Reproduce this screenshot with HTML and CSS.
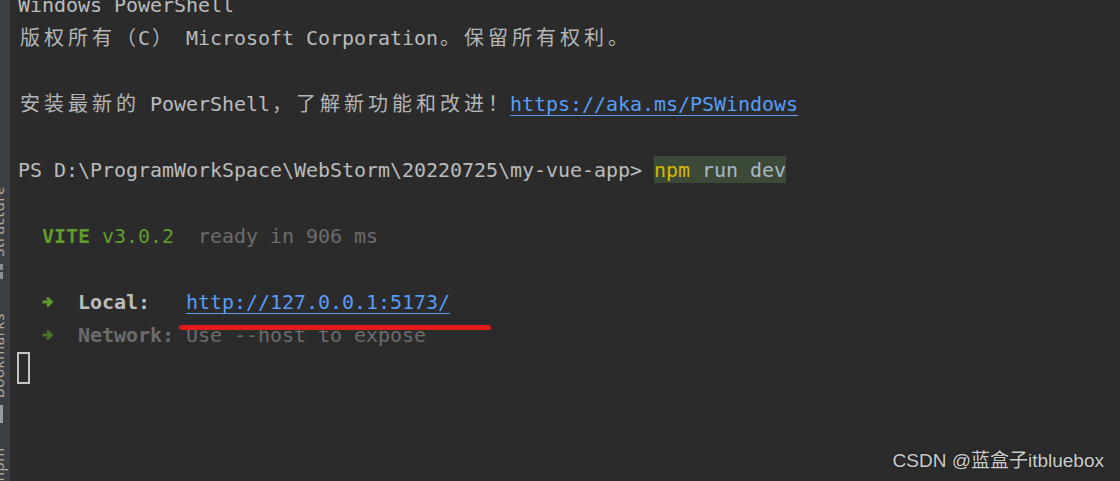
FILE: index.html
```html
<!DOCTYPE html>
<html lang="zh-CN">
<head>
  <meta charset="UTF-8">
  <title>Terminal – my-vue-app</title>
  <link rel="stylesheet" href="styles.css">
</head>
<body>

<div class="window">

  <!-- Barra lateral de herramientas -->
  <aside class="toolstrip">
    <span class="tool-label lbl-structure">Structure</span>
    <span class="tool-icon icon-grid"></span>
    <span class="tool-label lbl-bookmarks">Bookmarks</span>
    <span class="tool-icon icon-bookmark"></span>
    <span class="tool-label lbl-npm">npm</span>
  </aside>

  <!-- Salida del terminal -->
  <main class="terminal">
    <div class="output">
      <div class="line">Windows PowerShell</div>
      <div class="line"><span class="cjk">版权所有（</span>C<span class="cjk">）</span> Microsoft Corporation<span class="cjk">。保留所有权利。</span></div>
      <div class="line"></div>
      <div class="line"><span class="cjk">安装最新的</span> PowerShell<span class="cjk">，了解新功能和改进！</span><a class="link">https://aka.ms/PSWindows</a></div>
      <div class="line"></div>
      <div class="line">PS D:\ProgramWorkSpace\WebStorm\20220725\my-vue-app> <span class="cmd"><span class="cmd-name">npm</span> run dev</span></div>
      <div class="line"></div>
      <div class="line">  <b class="vite">VITE</b> <span class="vite">v3.0.2</span>  <span class="dim">ready in 906 ms</span></div>
      <div class="line"></div>
      <div class="line">  <svg class="arrow" viewBox="0 0 12 12"><path d="M0.5 6h8.5M5 1.8L9.4 6 5 10.2"/></svg>  <b>Local:</b>   <a class="link">http://127.0.0.1:5173/</a></div>
      <div class="line">  <svg class="arrow arrow-dim" viewBox="0 0 12 12"><path d="M0.5 6h8.5M5 1.8L9.4 6 5 10.2"/></svg>  <b class="dim">Network:</b> <span class="dim">Use --host to expose</span></div>
      <div class="line"><span class="cursor"></span></div>
    </div>
  </main>

  <!-- Marca roja bajo la URL -->
  <div class="mark"></div>

  <div class="watermark">CSDN @蓝盒子itbluebox</div>
</div>

</body>
</html>
```

FILE: styles.css
```css
body {
  margin: 0;
  background: #2b2b2b;
  overflow: hidden;
}

.window {
  position: relative;
  display: flex;
  height: 481px;
  overflow: hidden;
}

/* barra lateral */
.toolstrip {
  width: 11px;
  flex: none;
  background: #3c3f41;
  border-right: 1px solid #323436;
  display: flex;
  flex-direction: column;
  align-items: flex-start;
  overflow: hidden;
  padding-top: 186px;
  box-sizing: border-box;
}

.tool-label {
  writing-mode: vertical-rl;
  transform: rotate(180deg);
  font-family: "Noto Sans", sans-serif;
  font-size: 15px;
  line-height: 15px;
  color: #b2ab9c;
  margin-left: -9px;
  letter-spacing: 0.6px;
}

.lbl-bookmarks { margin-top: 34px; }
.lbl-npm { margin-top: 24px; }

.tool-icon {
  display: block;
  width: 3px;
  background: #8c8f91;
}

.icon-grid {
  height: 15px;
  margin-top: 7px;
  background: linear-gradient(#8c8f91 0 6px, transparent 6px 8px, #8c8f91 8px);
}

.icon-bookmark {
  height: 18px;
  margin-top: 7px;
  background: #9a9d9f;
}

/* terminal */
.terminal {
  flex: 1;
  padding-left: 7px;
  font-family: "DejaVu Sans Mono", "Noto Sans CJK SC", monospace;
  font-size: 20px;
  letter-spacing: -0.04px;
  color: #babcbe;
}

.output {
  margin-top: -11px;
}

.line {
  height: 33px;
  line-height: 33px;
  white-space: pre;
}

.cjk {
  font-family: "Noto Sans CJK SC", sans-serif;
  line-height: 16px;
  letter-spacing: 4px;
  margin-left: 2px;
  margin-right: -2px;
  color: #b4b6b8;
}

.link {
  color: #589df6;
  text-decoration: underline;
  text-underline-offset: 4px;
  text-decoration-thickness: 1px;
}

.cmd {
  background: #3b4a36;
  color: #a9b7c6;
  padding: 2px 0 1px;
}

.cmd-name { color: #d9b600; }

b { font-weight: bold; }

.vite { color: #5f9c2c; }
.dim { color: #6c6c6c; }

.arrow {
  width: 12px;
  height: 12px;
  vertical-align: 1px;
  fill: none;
  stroke: #5f9c2c;
  stroke-width: 2.8;
}

.arrow-dim { stroke: #48712a; }

.cursor {
  display: inline-block;
  width: 13px;
  height: 32px;
  margin-left: -1px;
  box-sizing: border-box;
  border: 2px solid #c4c4c4;
  vertical-align: -9px;
}

/* anotación */
.mark {
  position: absolute;
  left: 179px;
  top: 325px;
  width: 312px;
  height: 5px;
  border-radius: 3px;
  background: #e31b1b;
}

.watermark {
  position: absolute;
  right: 16px;
  bottom: 9px;
  font-family: "Liberation Sans", "Noto Sans CJK SC", sans-serif;
  font-size: 19px;
  color: #cdcdcd;
  text-shadow: 0 0 2px #111;
}
```
